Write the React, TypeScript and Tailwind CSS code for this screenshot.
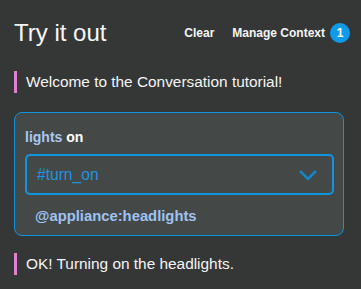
import type { PropsWithChildren } from "react";

function Message({ children }: PropsWithChildren) {
  return (
    <div className="flex items-center gap-[9px]">
      <span className="h-[22px] w-[3px] bg-[#e07fd6]" />
      <p className="text-[15.4px] leading-[22px] text-[#f4f4f4]">{children}</p>
    </div>
  );
}

export default function App() {
  return (
    <div
      className="h-[289px] w-[361px] overflow-hidden bg-[#353737] text-white"
      style={{ fontFamily: '"Liberation Sans", Arial, sans-serif' }}
    >
      <header className="flex items-center justify-between pl-[14px] pr-[11px] pt-[19px]">
        <h1 className="text-[24px] font-light leading-[28px] text-[#f6f6f6]">Try it out</h1>
        <div className="flex items-center">
          <button type="button" className="text-[12px] font-bold text-[#f4f4f4]">
            Clear
          </button>
          <button type="button" className="ml-[18px] flex items-center text-[12px] font-bold text-[#f4f4f4]">
            Manage Context
            <span className="ml-[5px] flex h-[20px] w-[20px] items-center justify-center rounded-full bg-[#0e9bea] text-[12px] font-bold text-white">
              1
            </span>
          </button>
        </div>
      </header>

      <div className="ml-[14px] mt-[24px]">
        <Message>Welcome to the Conversation tutorial!</Message>
      </div>

      <section className="ml-[14px] mr-[17px] mt-[19px] rounded-[8px] border border-[#0e94dd] bg-[#444947] pb-[9px] pl-[10px] pr-[9px] pt-[15px]">
        <p className="text-[14px] font-bold leading-[18px]">
          <span className="text-[#a9c7f0]">lights</span> <span className="text-white">on</span>
        </p>
        <div className="mt-[8px] flex h-[41px] items-center justify-between rounded-[5px] border-2 border-[#0f96e0] pl-[10px] pr-[14px]">
          <span className="text-[15.6px] text-[#1d94e0]">#turn_on</span>
          <svg width="20" height="12" viewBox="0 0 20 12" fill="none">
            <path d="M2 2l8 8 8-8" stroke="#1585c8" strokeWidth="2.6" />
          </svg>
        </div>
        <p className="mt-[11px] pl-[10px] text-[14.8px] font-bold leading-[20px] text-[#9fc2f2]">
          @appliance:headlights
        </p>
      </section>

      <div className="ml-[14px] mt-[17px]">
        <Message>OK! Turning on the headlights.</Message>
      </div>
    </div>
  );
}
